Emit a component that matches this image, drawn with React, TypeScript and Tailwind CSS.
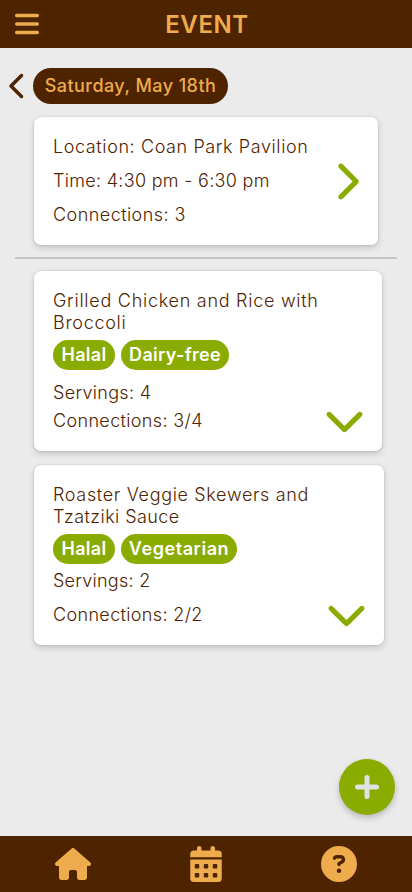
import type { ReactNode } from 'react';
import {
    FaBars,
    FaCalendarDays,
    FaChevronDown,
    FaChevronLeft,
    FaChevronRight,
    FaCircleQuestion,
    FaHouse
} from 'react-icons/fa6';

interface TextProps {
    children: ReactNode;
    className?: string;
}

function Line({ children, className = 'tracking-[0.6px]' }: TextProps) {
    return <p className={`whitespace-nowrap leading-[22px] ${className}`}>{children}</p>;
}

function Tag({ children, className = '' }: TextProps) {
    return (
        <span
            className={`flex h-[30px] items-center justify-center whitespace-nowrap rounded-full bg-[#8aab00] pb-px font-semibold text-white ${className}`}
        >
            {children}
        </span>
    );
}

function Card({ children, className = '' }: TextProps) {
    return (
        <section
            className={`ml-[34px] flex rounded-[7px] bg-white pl-[19px] shadow-[0_0_2px_rgba(0,0,0,0.18),0_3px_6px_rgba(0,0,0,0.16)] ${className}`}
        >
            {children}
        </section>
    );
}

export default function App() {
    return (
        <div className="flex h-[892px] w-[412px] flex-col bg-[#ebebeb] font-['Inter','Open_Sans',sans-serif] text-[18px] font-[350] text-[#4e2300]">
            <header className="grid h-12 shrink-0 grid-cols-[1fr_auto_1fr] items-center bg-[#4e2300] text-[#eeac4c]">
                <button className="ml-[15px] w-6" aria-label="Menu">
                    <FaBars className="h-7 w-6" />
                </button>
                <h1 className="pl-[2px] pt-[2px] text-[24px] font-semibold tracking-[0.6px]">EVENT</h1>
            </header>

            <main className="flex flex-1 flex-col pt-5">
                <div className="flex h-9 items-center">
                    <button className="ml-[9px] w-[18px]" aria-label="Back">
                        <FaChevronLeft className="h-7 w-[18px]" />
                    </button>
                    <div className="ml-[6px] flex h-9 w-[195px] items-center justify-center whitespace-nowrap rounded-full bg-[#4e2300] pb-px text-[18px] font-medium tracking-[0.45px] text-[#eeac4c]">
                        Saturday, May 18th
                    </div>
                </div>

                <Card className="mt-[13px] h-32 w-[344px] items-center justify-between pr-[19px]">
                    <div className="flex flex-col gap-3">
                        <Line>Location: Coan Park Pavilion</Line>
                        <Line className="tracking-[0.3px]">Time: 4:30 pm - 6:30 pm</Line>
                        <Line className="tracking-[0.45px]">Connections: 3</Line>
                    </div>
                    <FaChevronRight className="h-[41px] w-[26px] text-[#8aab00]" />
                </Card>

                <hr className="mx-[15px] mt-3 border-t-2 border-[#c6c6c6]" />

                <Card className="mt-3 h-[180px] w-[348px] items-start justify-between pr-[17px] pt-[19px]">
                    <div>
                        <Line className="tracking-[0.73px]">Grilled Chicken and Rice with</Line>
                        <Line className="tracking-[0.7px]">Broccoli</Line>
                        <div className="mt-[6px] flex gap-[6px]">
                            <Tag className="w-[62px] tracking-[0.3px]">Halal</Tag>
                            <Tag className="w-[108px] tracking-[0.3px]">Dairy-free</Tag>
                        </div>
                        <Line className="mt-3 tracking-[0.3px]">Servings: 4</Line>
                        <Line className="mt-[6px] tracking-[0.35px]">Connections: 3/4</Line>
                    </div>
                    <FaChevronDown className="mb-[11px] h-[41px] w-[41px] self-end text-[#8aab00]" />
                </Card>

                <Card className="mt-[14px] h-[180px] w-[350px] items-start justify-between pr-[17px] pt-[19px]">
                    <div>
                        <Line className="tracking-[0.66px]">Roaster Veggie Skewers and</Line>
                        <Line className="tracking-[0.42px]">Tzatziki Sauce</Line>
                        <div className="mt-[6px] flex gap-[6px]">
                            <Tag className="w-[62px] tracking-[0.3px]">Halal</Tag>
                            <Tag className="w-[116px] tracking-[0.55px]">Vegetarian</Tag>
                        </div>
                        <Line className="mt-[6px] tracking-[0.25px]">Servings: 2</Line>
                        <Line className="mt-3 tracking-[0.35px]">Connections: 2/2</Line>
                    </div>
                    <FaChevronDown className="mb-[11px] h-[41px] w-[41px] self-end text-[#8aab00]" />
                </Card>

                <button
                    className="mb-[21px] mr-[17px] mt-auto flex h-14 w-14 items-center justify-center self-end rounded-full bg-[#8aab00] text-[#e2e2e2] shadow-[0_3px_6px_rgba(0,0,0,0.22)]"
                    aria-label="Add"
                >
                    <svg
                        className="h-6 w-6"
                        viewBox="0 0 24 24"
                        fill="none"
                        stroke="currentColor"
                        strokeWidth="5"
                        strokeLinecap="round"
                    >
                        <path d="M12 2.5v19M2.5 12h19" />
                    </svg>
                </button>
            </main>

            <nav className="flex h-14 shrink-0 items-center justify-between bg-[#4e2300] pl-[55px] pr-[55px] text-[#eeac4c]">
                <FaHouse className="h-8 w-9" />
                <FaCalendarDays className="h-9 w-8" />
                <FaCircleQuestion className="h-9 w-9" />
            </nav>
        </div>
    );
}
